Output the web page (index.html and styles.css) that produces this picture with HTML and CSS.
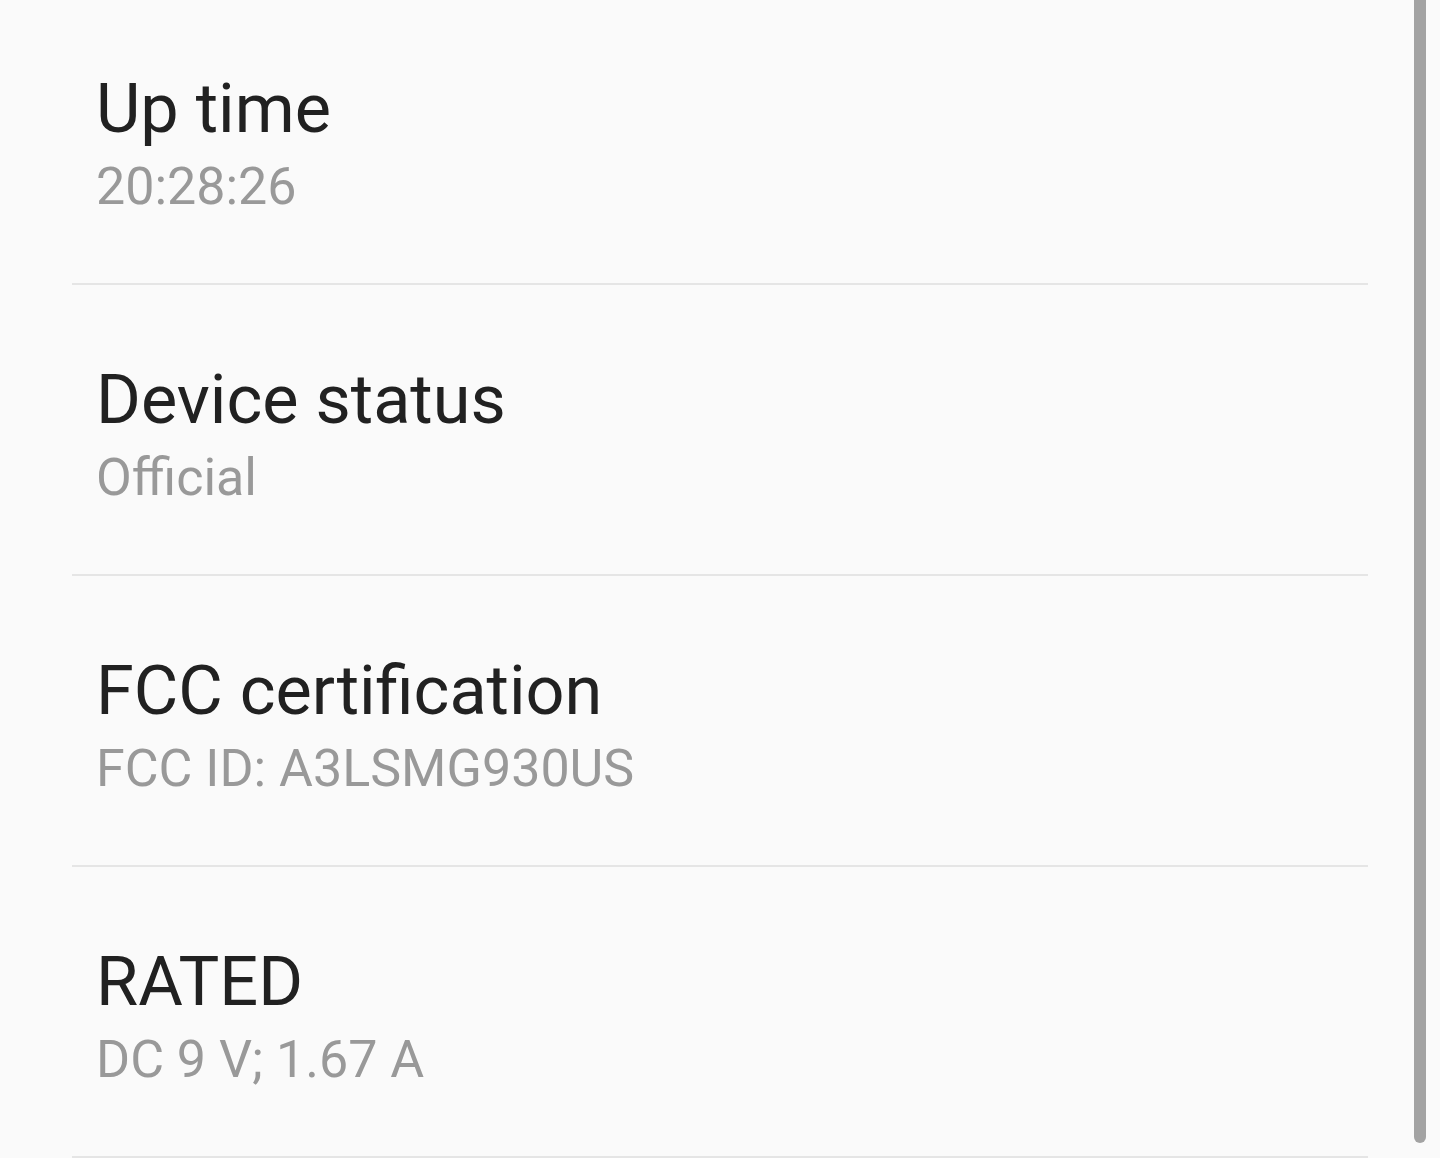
FILE: index.html
```html
<!DOCTYPE html>
<html>
<head>
<meta charset="utf-8">
<link rel="stylesheet" href="styles.css">
</head>
<body>
<div class="screen">
  <ul class="list">
    <li class="row"><div class="title">Up time</div><div class="sub">20:28:26</div></li>
    <li class="row"><div class="title">Device status</div><div class="sub">Official</div></li>
    <li class="row"><div class="title">FCC certification</div><div class="sub">FCC ID: A3LSMG930US</div></li>
    <li class="row"><div class="title">RATED</div><div class="sub">DC 9 V; 1.67 A</div></li>
  </ul>
  <div class="scrollbar"></div>
</div>
</body>
</html>
```
FILE: styles.css
```css
html, body {
  margin: 0;
  padding: 0;
  background: #fafafa;
}
.screen {
  position: relative;
  width: 1440px;
  height: 1158px;
  overflow: hidden;
  font-family: Roboto, "Liberation Sans", sans-serif;
}
.list {
  list-style: none;
  margin: -6px 72px 0 72px;
  padding: 0;
}
.row {
  border-bottom: 2px solid #e5e5e5;
  padding: 75px 0 0 24px;
  box-sizing: content-box;
  height: 214px;
}
.title {
  font-size: 68.4px;
  line-height: 80px;
  color: #212121;
}
.sub {
  font-size: 52px;
  line-height: 76px;
  color: #999999;
}
.scrollbar {
  position: absolute;
  left: 1414px;
  top: -10px;
  width: 12px;
  height: 1153px;
  background: #a3a3a3;
  border-radius: 6px;
}
```
